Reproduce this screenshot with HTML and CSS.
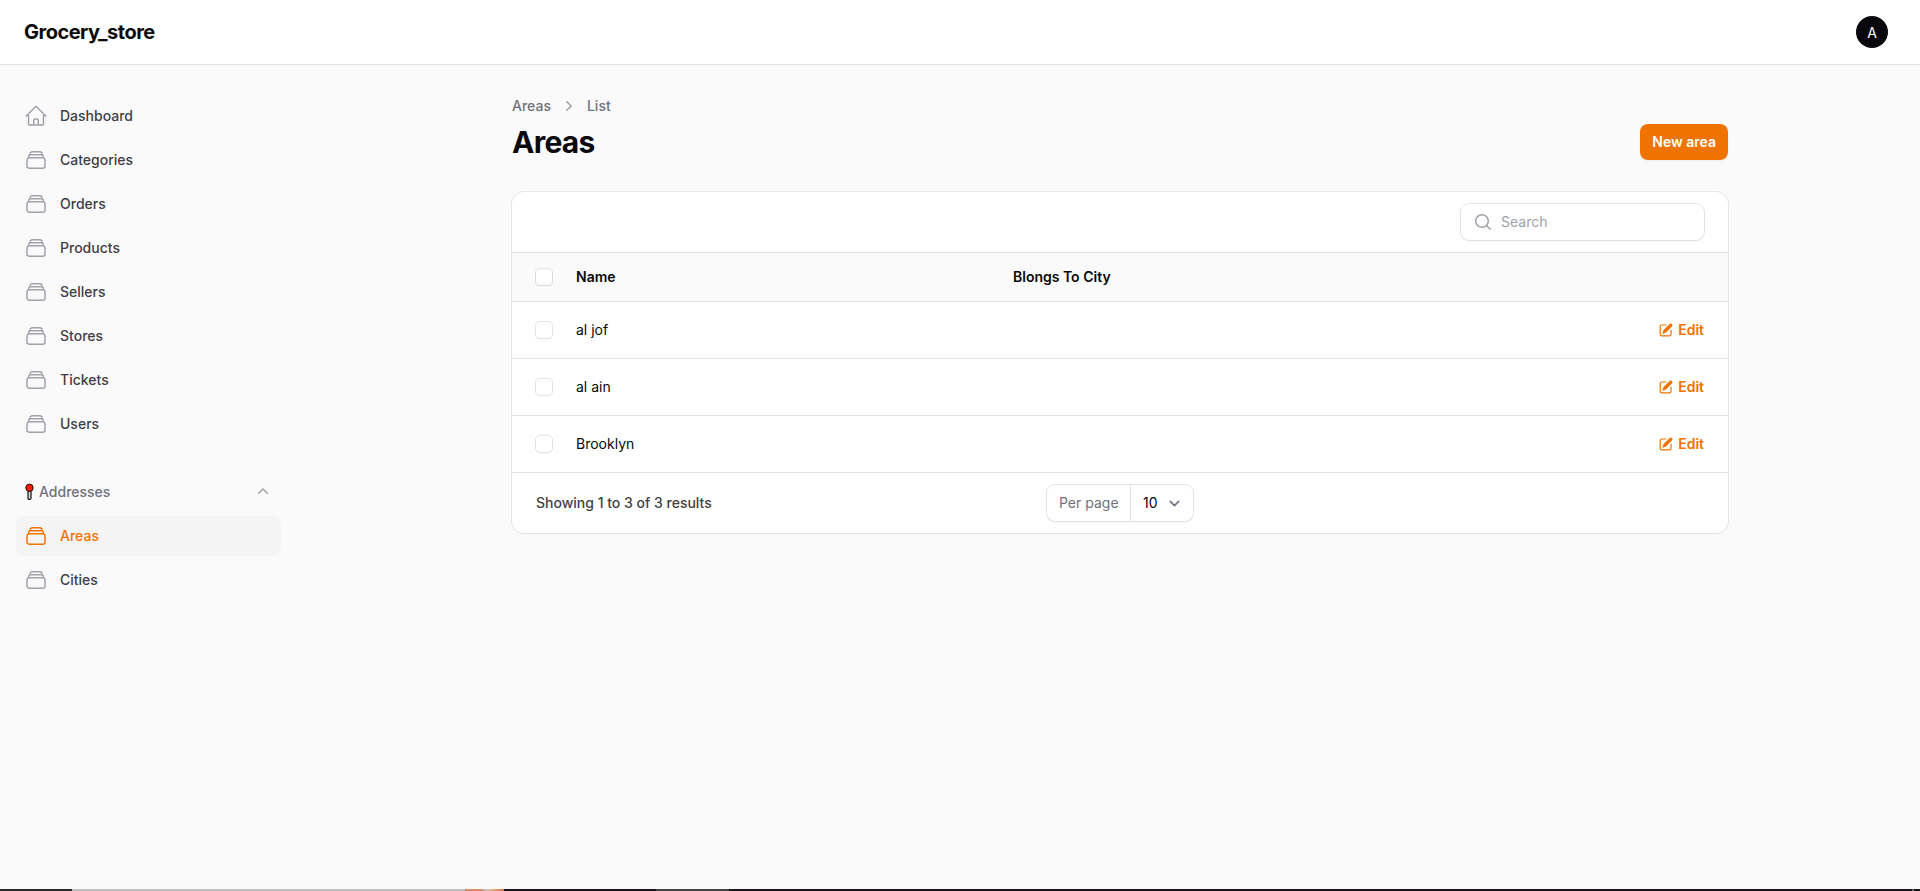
FILE: index.html
```html
<!DOCTYPE html>
<html lang="en">
<head>
<meta charset="utf-8">
<title>Areas - Grocery_store</title>
<link rel="stylesheet" href="styles.css">
</head>
<body>
<svg class="sprite" aria-hidden="true">
  <symbol id="home" viewBox="0 0 24 24"><path d="m2.25 12 8.954-8.955c.44-.439 1.152-.439 1.591 0L21.75 12M4.5 9.75v10.125c0 .621.504 1.125 1.125 1.125H9.75v-4.875c0-.621.504-1.125 1.125-1.125h2.25c.621 0 1.125.504 1.125 1.125V21h4.125c.621 0 1.125-.504 1.125-1.125V9.75M8.25 21h8.25"/></symbol>
  <symbol id="stack" viewBox="0 0 24 24"><path d="M6 6.878V6a2.25 2.25 0 0 1 2.25-2.25h7.5A2.25 2.25 0 0 1 18 6v.878m-12 0c.235-.083.487-.128.75-.128h10.5c.263 0 .515.045.75.128m-12 0A2.25 2.25 0 0 0 4.5 9v.878m13.5-3A2.25 2.25 0 0 1 19.5 9v.878m0 0a2.246 2.246 0 0 0-.75-.128H5.25c-.263 0-.515.045-.75.128m15 0A2.25 2.25 0 0 1 21 12v6a2.25 2.25 0 0 1-2.25 2.25H5.25A2.25 2.25 0 0 1 3 18v-6c0-.98.626-1.813 1.5-2.122"/></symbol>
  <symbol id="pencil" viewBox="0 0 20 20"><path d="m5.433 13.917 1.262-3.155A4 4 0 0 1 7.58 9.42l6.92-6.918a2.121 2.121 0 0 1 3 3l-6.92 6.918c-.383.383-.84.685-1.343.886l-3.154 1.262a.5.5 0 0 1-.65-.65Z"/><path d="M3.5 5.75c0-.69.56-1.25 1.25-1.25H10A.75.75 0 0 0 10 3H4.75A2.75 2.75 0 0 0 2 5.75v9.5A2.75 2.75 0 0 0 4.75 18h9.5A2.75 2.75 0 0 0 17 15.25V10a.75.75 0 0 0-1.5 0v5.25c0 .69-.56 1.25-1.25 1.25h-9.5c-.69 0-1.25-.56-1.25-1.25v-9.5Z"/></symbol>
</svg>

<header class="topbar">
  <div class="brand">Grocery_store</div>
  <div class="avatar">A</div>
</header>

<div class="layout">
  <nav class="sidebar">
    <ul class="nav-list">
      <li class="nav-item"><svg class="nav-icon"><use href="#home"/></svg>Dashboard</li>
      <li class="nav-item"><svg class="nav-icon"><use href="#stack"/></svg>Categories</li>
      <li class="nav-item"><svg class="nav-icon"><use href="#stack"/></svg>Orders</li>
      <li class="nav-item"><svg class="nav-icon"><use href="#stack"/></svg>Products</li>
      <li class="nav-item"><svg class="nav-icon"><use href="#stack"/></svg>Sellers</li>
      <li class="nav-item"><svg class="nav-icon"><use href="#stack"/></svg>Stores</li>
      <li class="nav-item"><svg class="nav-icon"><use href="#stack"/></svg>Tickets</li>
      <li class="nav-item"><svg class="nav-icon"><use href="#stack"/></svg>Users</li>
    </ul>
    <div class="nav-group">
      <div class="group-head">
        <svg class="pin" viewBox="0 0 11 18"><rect x="4" y="7" width="3" height="9.4" rx="1.2" fill="#d4d4d4" stroke="#111" stroke-width="1.2"/><circle cx="5.5" cy="4.8" r="3.7" fill="#f61a08" stroke="#2b0f0c" stroke-width="1"/></svg>
        <span class="group-label">Addresses</span>
        <svg class="group-chevron" viewBox="0 0 20 20"><path d="M9.47 6.47a.75.75 0 0 1 1.06 0l4.25 4.25a.75.75 0 1 1-1.06 1.06L10 8.06l-3.72 3.72a.75.75 0 0 1-1.06-1.06l4.25-4.25Z"/></svg>
      </div>
      <ul class="nav-list">
        <li class="nav-item active"><svg class="nav-icon"><use href="#stack"/></svg>Areas</li>
        <li class="nav-item"><svg class="nav-icon"><use href="#stack"/></svg>Cities</li>
      </ul>
    </div>
  </nav>

  <main class="main">
    <div class="crumbs">
      <span>Areas</span>
      <svg class="crumb-chevron" viewBox="0 0 20 20"><path d="M7.21 14.77a.75.75 0 0 1 .02-1.06L11.168 10 7.23 6.29a.75.75 0 1 1 1.04-1.08l4.5 4.25a.75.75 0 0 1 0 1.08l-4.5 4.25a.75.75 0 0 1-1.06-.02Z"/></svg>
      <span>List</span>
    </div>
    <div class="page-head">
      <h1 class="title">Areas</h1>
      <button class="primary">New area</button>
    </div>

    <section class="card">
      <div class="toolbar">
        <label class="search">
          <svg class="search-icon" viewBox="0 0 20 20"><path d="M9 3.5a5.5 5.5 0 1 0 0 11 5.5 5.5 0 0 0 0-11ZM2 9a7 7 0 1 1 12.452 4.391l3.328 3.329a.75.75 0 1 1-1.06 1.06l-3.329-3.328A7 7 0 0 1 2 9Z"/></svg>
          <input class="search-input" type="text" placeholder="Search">
        </label>
      </div>
      <div class="row row-head">
        <span class="check"></span><span>Name</span><span>Blongs To City</span>
      </div>
      <div class="row">
        <span class="check"></span><span>al jof</span><span></span>
        <span class="edit"><svg class="edit-icon"><use href="#pencil"/></svg>Edit</span>
      </div>
      <div class="row">
        <span class="check"></span><span>al ain</span><span></span>
        <span class="edit"><svg class="edit-icon"><use href="#pencil"/></svg>Edit</span>
      </div>
      <div class="row">
        <span class="check"></span><span>Brooklyn</span><span></span>
        <span class="edit"><svg class="edit-icon"><use href="#pencil"/></svg>Edit</span>
      </div>
      <div class="footer">
        <span class="summary">Showing 1 to 3 of 3 results</span>
        <div class="per-page">
          <span class="per-label">Per page</span>
          <span class="per-value">10
            <svg class="per-chevron" viewBox="0 0 20 20"><path d="m6 8 4 4 4-4"/></svg>
          </span>
        </div>
      </div>
    </section>
  </main>
</div>

<div class="taskbar">
  <span class="seg-dark"></span><span class="seg-light"></span><span class="seg-photo"></span><span class="seg-black"></span><span class="seg-gray"></span><span class="seg-rest"></span><span class="seg-tick"></span><span class="seg-end"></span>
</div>
</body>
</html>
```
FILE: styles.css
```css
* { box-sizing: border-box; }
body {
  margin: 0;
  height: 891px;
  overflow: hidden;
  display: flex;
  flex-direction: column;
  background: #fafafa;
  color: #09090b;
  font: 400 14px/20px Inter, sans-serif;
}
ul { list-style: none; margin: 0; padding: 0; }
svg { display: block; flex: none; }
.sprite { position: absolute; width: 0; height: 0; }

.topbar {
  flex: none;
  height: 64px;
  padding: 0 32px 0 24px;
  display: flex;
  align-items: center;
  justify-content: space-between;
  background: #fff;
  box-shadow: 0 0 0 1px rgba(9, 9, 11, .05), 0 1px 2px rgba(0, 0, 0, .05);
}
.brand { font-size: 20px; line-height: 20px; font-weight: 700; letter-spacing: -.5px; }
.avatar {
  width: 32px;
  height: 32px;
  border-radius: 50%;
  background: #09090b;
  color: #fff;
  font-size: 14px;
  line-height: 33px;
  text-align: center;
}

.layout { flex: 1; display: flex; min-height: 0; }
.sidebar { width: 320px; padding: 32px 39px 32px 16px; display: flex; flex-direction: column; gap: 28px; }
.nav-list, .nav-group { display: flex; flex-direction: column; gap: 4px; }
.nav-item {
  height: 40px;
  padding: 0 8px;
  display: flex;
  align-items: center;
  gap: 12px;
  border-radius: 8px;
  color: #3f3f46;
  font-weight: 500;
}
.nav-icon { width: 24px; height: 24px; fill: none; stroke: #a1a1aa; stroke-width: 1.5; stroke-linecap: round; stroke-linejoin: round; }
.active { background: #f4f4f5; color: #ee7300; }
.active .nav-icon { stroke: #ee7300; }
.group-head { height: 40px; padding: 0 8px; display: flex; align-items: center; color: #71717a; font-weight: 500; }
.pin { width: 11px; height: 18px; margin-right: 4px; }
.group-label { flex: 1; }
.group-chevron { width: 20px; height: 20px; fill: #a1a1aa; }

.main { width: 1216px; margin-left: 192px; padding-top: 32px; }
.crumbs { display: flex; align-items: center; gap: 8px; color: #71717a; font-weight: 500; }
.crumb-chevron { width: 20px; height: 20px; fill: #a1a1aa; }
.page-head { margin-top: 8px; display: flex; align-items: center; justify-content: space-between; }
.title { margin: 0; font-size: 30px; line-height: 36px; font-weight: 700; letter-spacing: -.75px; }
.primary {
  height: 36px;
  padding: 0 12px;
  border: 0;
  border-radius: 8px;
  background: #ee7300;
  color: #fff;
  font: 600 14px/20px Inter, sans-serif;
  box-shadow: 0 1px 2px rgba(0, 0, 0, .05);
}

.card {
  margin-top: 32px;
  border-radius: 12px;
  background: #fff;
  overflow: hidden;
  box-shadow: 0 0 0 1px rgba(9, 9, 11, .07), 0 1px 2px rgba(0, 0, 0, .05);
}
.toolbar { height: 60px; padding: 0 24px; display: flex; align-items: center; justify-content: flex-end; }
.search {
  width: 243px;
  height: 36px;
  padding: 0 12px;
  display: flex;
  align-items: center;
  gap: 8px;
  border-radius: 8px;
  box-shadow: 0 0 0 1px rgba(9, 9, 11, .1), 0 1px 2px rgba(0, 0, 0, .05);
}
.search-icon { width: 20px; height: 20px; fill: #a1a1aa; }
.search-input { flex: 1; min-width: 0; padding: 0; border: 0; outline: 0; background: none; font: 400 14px/24px Inter, sans-serif; }
.search-input::placeholder { color: #a1a1aa; }

.row {
  height: 57px;
  padding: 0 24px;
  border-top: 1px solid #e4e4e7;
  display: grid;
  grid-template-columns: 40px 437px 1fr auto;
  align-items: center;
}
.row-head { height: 49px; background: #fafafa; font-weight: 600; }
.check { width: 16px; height: 16px; border-radius: 4px; background: #fff; box-shadow: 0 0 0 1px rgba(9, 9, 11, .1), 0 1px 2px rgba(0, 0, 0, .05); }
.edit { display: flex; align-items: center; gap: 4px; color: #ee7300; font-weight: 600; }
.edit-icon { width: 16px; height: 16px; fill: #ee7300; }
.footer {
  height: 61px;
  padding: 0 24px;
  border-top: 1px solid #e4e4e7;
  display: grid;
  grid-template-columns: 1fr auto 1fr;
  align-items: center;
}
.summary { color: #3f3f46; font-weight: 500; }
.per-page { height: 36px; display: flex; border-radius: 8px; box-shadow: 0 0 0 1px rgba(9, 9, 11, .1), 0 1px 2px rgba(0, 0, 0, .05); }
.per-label { width: 84px; padding-left: 12px; border-right: 1px solid #e4e4e7; line-height: 36px; color: #71717a; }
.per-value { width: 62px; padding: 0 8px 0 12px; display: flex; align-items: center; justify-content: space-between; }
.per-chevron { width: 21px; height: 21px; fill: none; stroke: #6b7280; stroke-width: 1.5; stroke-linecap: round; stroke-linejoin: round; }

.taskbar { flex: none; height: 2px; display: flex; background: #171518; }
.seg-dark { width: 72px; background: #29292a; }
.seg-light { width: 393px; background: #c0c0c0; }
.seg-photo { width: 39px; background: linear-gradient(90deg, #d98a66 0 40%, #c9c4bd 55%, #f0b48a 65%, #d07a50); }
.seg-black { width: 152px; }
.seg-gray { width: 73px; background: #444344; }
.seg-rest { flex: 1; }
.seg-tick { width: 2px; background: #666; }
.seg-end { width: 6px; }
```
